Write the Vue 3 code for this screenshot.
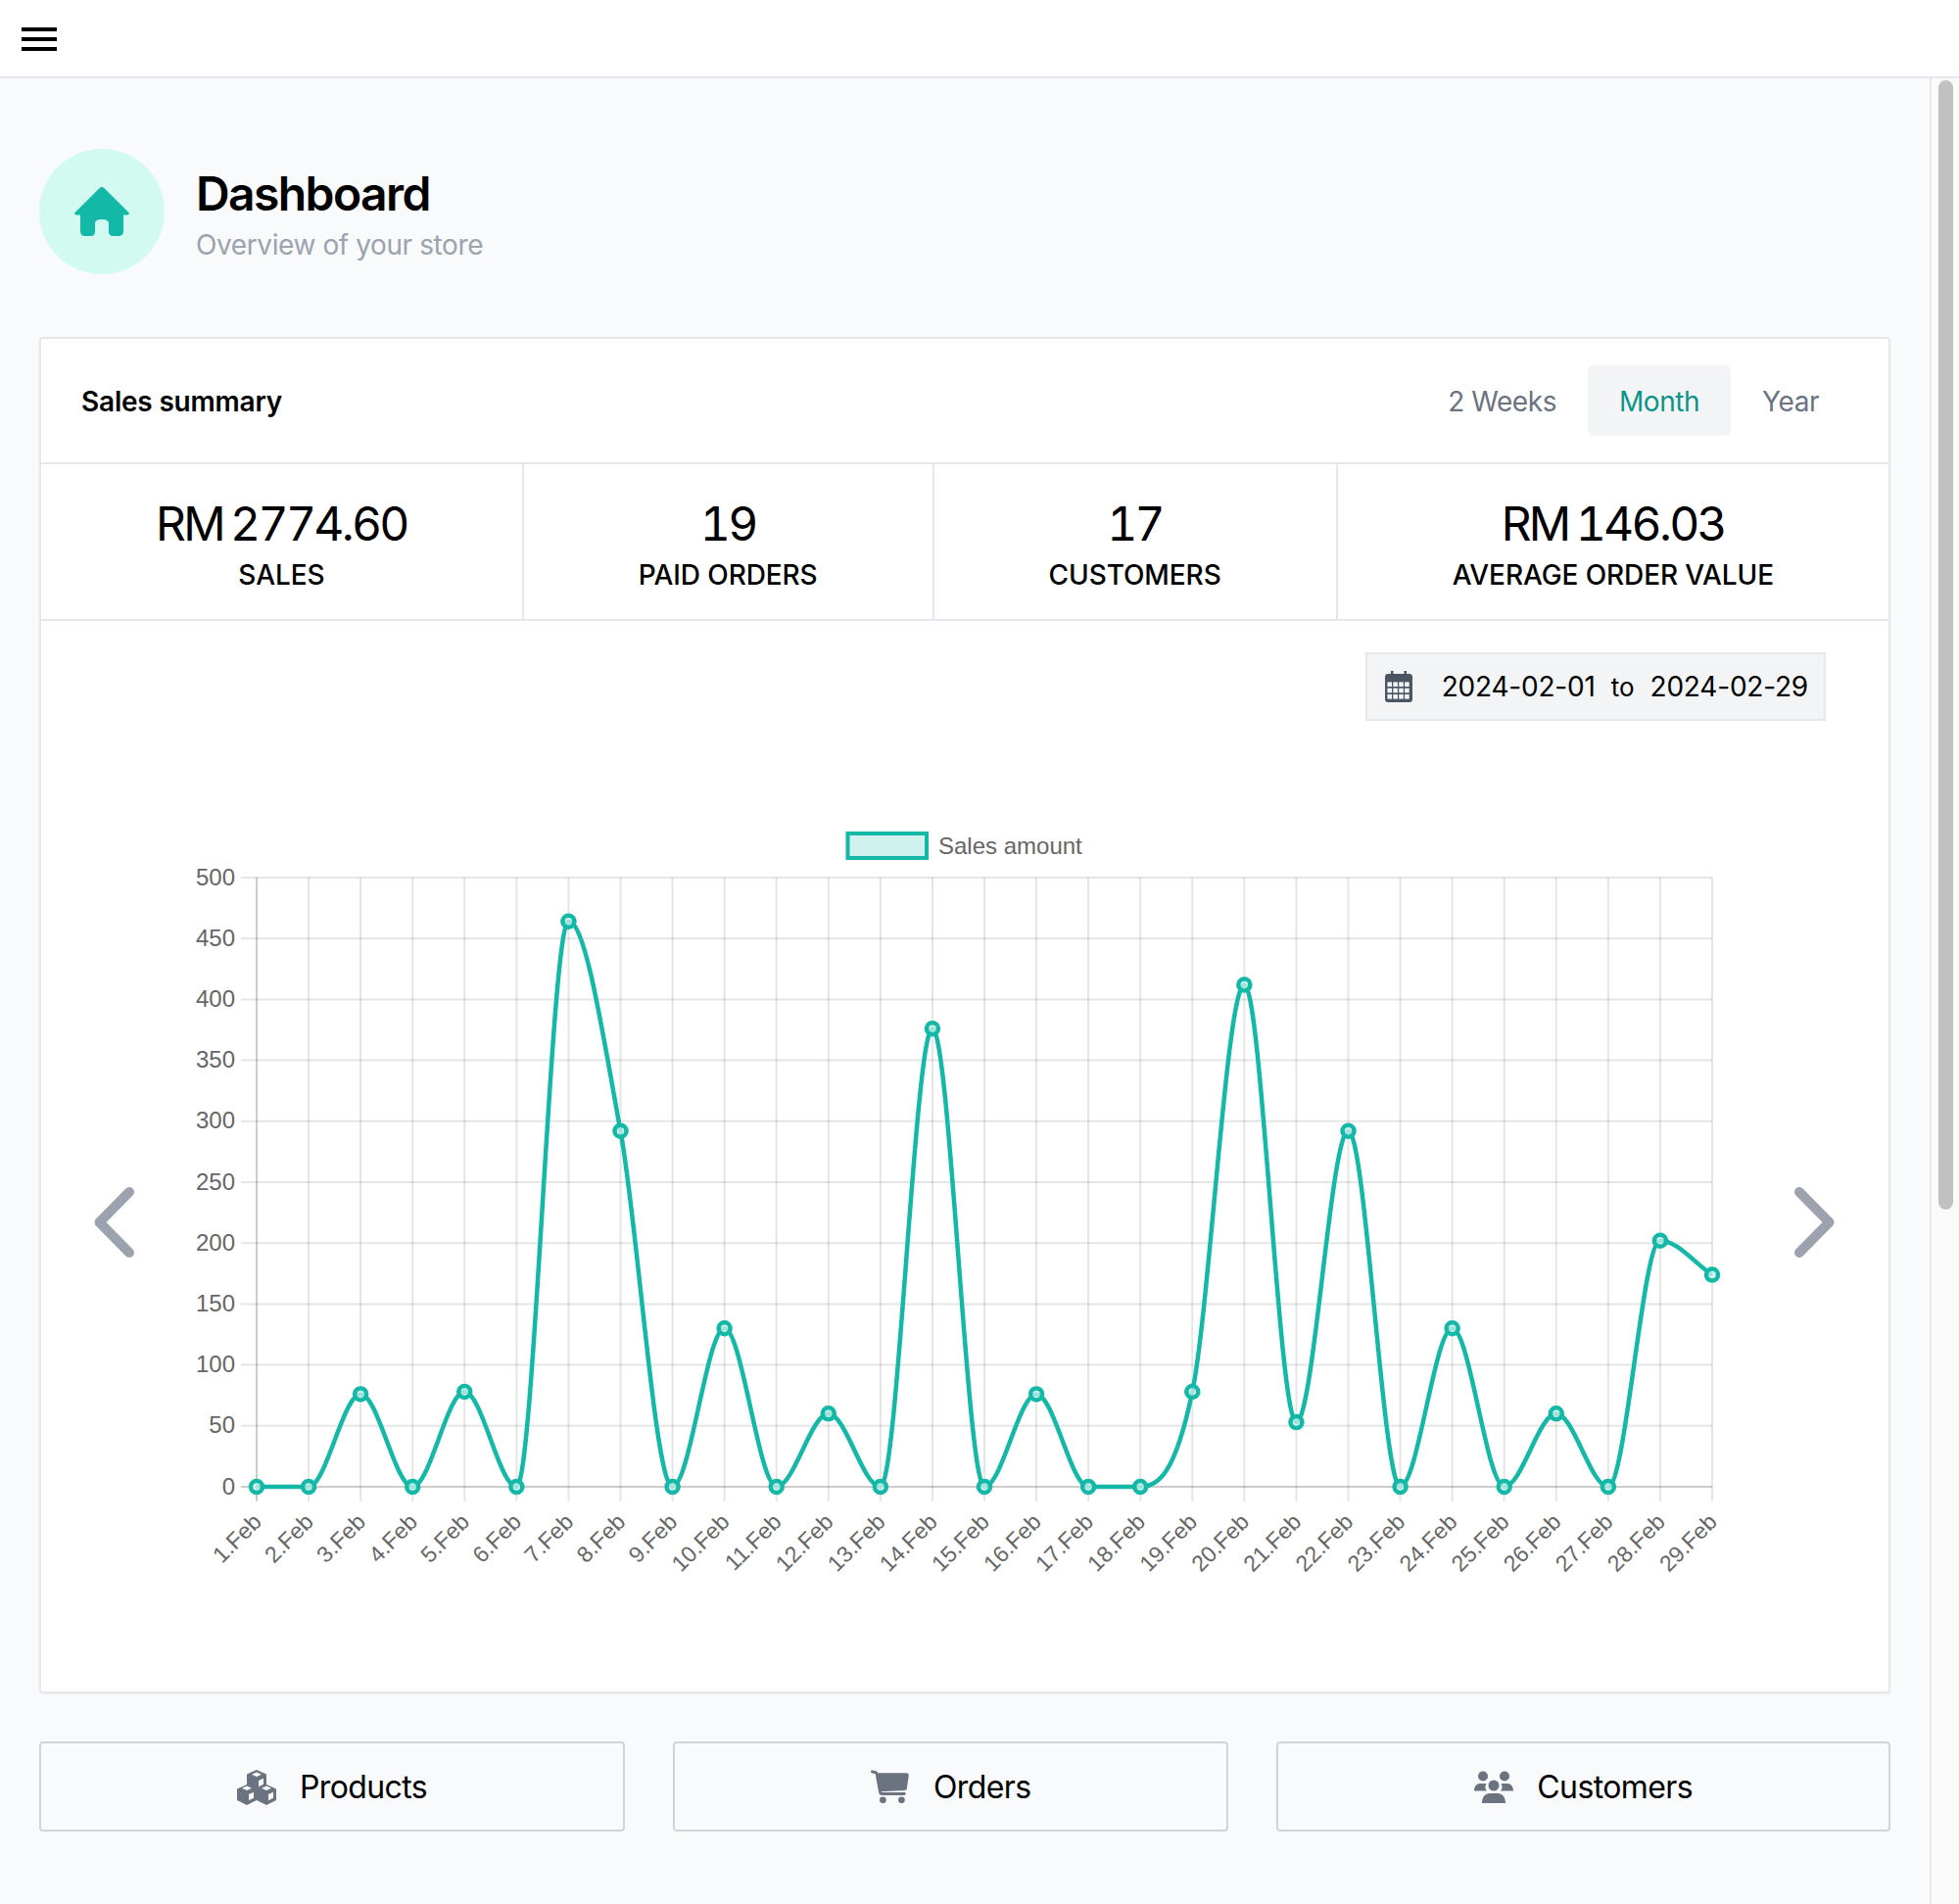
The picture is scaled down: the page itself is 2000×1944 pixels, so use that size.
<template>
    <div class="page">
        <header class="topbar">
            <button class="menu-button" type="button" aria-label="Menu">
                <span></span><span></span><span></span>
            </button>
        </header>

        <div class="layout">
            <main class="content">
                <div class="page-title">
                    <div class="title-icon">
                        <svg width="56" height="50" viewBox="0 0 56 50">
                            <path fill="#14b8a6" d="M28 0c.9 0 1.7.4 2.3 1.1l24.9 24.6c1.5 1.6.4 2.8-1.7 2.8H50v17c0 2.500-2 4.500-4.500 4.500H39c-2.200 0-4-1.800-4-4V37c0-2.800-3-4-7-4s-7 1.200-7 4v9c0 2.200-1.800 4-4 4h-6.500C8 50 6 48 6 45.500v-17H2.500c-2.100 0-3.200-1.200-1.700-2.800L25.700 1.100C26.300.4 27.100 0 28 0z" />
                        </svg>
                    </div>
                    <div class="title-text">
                        <h1>Dashboard</h1>
                        <p>Overview of your store</p>
                    </div>
                </div>

                <section class="card">
                    <div class="card-header">
                        <h2>Sales summary</h2>
                        <div class="tabs">
                            <button v-for="tab in tabs" :key="tab" type="button" class="tab" :class="{ active: tab === 'Month' }">{{ tab }}</button>
                        </div>
                    </div>

                    <div class="stats">
                        <div v-for="stat in stats" :key="stat.label" class="stat">
                            <div class="stat-value">{{ stat.value }}</div>
                            <div class="stat-label">{{ stat.label }}</div>
                        </div>
                    </div>

                    <div class="date-row">
                        <div class="date-range">
                            <svg width="28" height="32" viewBox="0 0 28 32">
                                <path fill="#4b5563" d="M6 0h2.500v3h11V0H22v3h3c1.700 0 3 1.300 3 3v23c0 1.700-1.300 3-3 3H3c-1.700 0-3-1.300-3-3V6c0-1.700 1.300-3 3-3h3z" />
                                <rect v-for="cell in calendarCells" :key="cell.key" :x="cell.x" :y="cell.y" width="4.600" height="4.600" fill="#f3f4f6" />
                            </svg>
                            <span class="date first">2024-02-01</span>
                            <span class="date-to">to</span>
                            <span class="date">2024-02-29</span>
                        </div>
                    </div>

                    <div class="chart-row">
                        <svg class="arrow" width="60" height="84" viewBox="0 0 60 84">
                            <path d="M46 11 15.500 42 46 73" fill="none" stroke="#9ca3af" stroke-width="10" stroke-linecap="round" stroke-linejoin="round" />
                        </svg>

                        <svg class="chart" width="1600" height="840" viewBox="160 828 1600 840">
                            <rect x="865.500" y="851" width="80.500" height="25" fill="#d0f1ed" stroke="#14b8a6" stroke-width="4" />
                            <text class="chart-text" x="958" y="871.500">Sales amount</text>

                            <g v-for="tick in yTicks" :key="tick.label">
                                <line x1="246" :x2="chartRight" :y1="tick.y" :y2="tick.y" :stroke="tick.label === 0 ? 'rgba(0,0,0,0.2)' : 'rgba(0,0,0,0.1)'" stroke-width="2" />
                                <text class="chart-text" x="240" :y="tick.y + 7.5" text-anchor="end">{{ tick.label }}</text>
                            </g>

                            <g v-for="(point, i) in points" :key="point.label">
                                <line :x1="point.x" :x2="point.x" :y1="chartTop" y2="1533" :stroke="i === 0 ? 'rgba(0,0,0,0.2)' : 'rgba(0,0,0,0.1)'" stroke-width="2" />
                                <text class="chart-text x-label" :x="point.x + 2" y="1551" text-anchor="end" :transform="`rotate(-45 ${point.x + 2} 1551)`" dominant-baseline="middle">{{ point.label }}</text>
                            </g>

                            <path :d="linePath" fill="none" stroke="#14b8a6" stroke-width="4.500" />
                            <circle v-for="point in points" :key="point.label" :cx="point.x" :cy="point.y" r="6" fill="rgba(208,241,237,0.75)" stroke="#14b8a6" stroke-width="4.500" />
                        </svg>

                        <svg class="arrow" width="60" height="84" viewBox="0 0 60 84">
                            <path d="M15 11 45.500 42 15 73" fill="none" stroke="#9ca3af" stroke-width="10" stroke-linecap="round" stroke-linejoin="round" />
                        </svg>
                    </div>
                </section>

                <nav class="links">
                    <a class="link" href="#">
                        <svg width="40" height="36" viewBox="0 0 40 36">
                            <path fill="#6b7280" d="M20 0l10 4.500V15l10 4.500V31l-10 5-10-5-10 5-10-5V19.500L10 15V4.500z" />
                            <path fill="#f9fafb" d="M20 2.500 25 4.800 20 7.100 15 4.800zM22 11l5-2.200v6l-5 2.400zM10 16.500l5 2.300-5 2.300-5-2.300zM30 16.500l5 2.300-5 2.300-5-2.300zM12 25l5-2.200v6l-5 2.400zM32 25l5-2.200v6l-5 2.400z" />
                        </svg>
                        <span>Products</span>
                    </a>
                    <a class="link" href="#">
                        <svg width="40" height="35" viewBox="0 0 42 36">
                            <path d="M1.500 1.500 5 2.500c.8 0 1.200.4 1.400 1.200l3.600 20c.2 1 .9 1.600 2 1.600h24" fill="none" stroke="#6b7280" stroke-width="3" stroke-linecap="round" />
                            <path fill="#6b7280" d="M7 3h31c2 0 3 1 2.700 3l-2 13.500c-.3 1.500-1 2-2.500 2.100L10 23z" />
                            <circle cx="13" cy="32" r="3.500" fill="#6b7280" />
                            <circle cx="33" cy="32" r="3.500" fill="#6b7280" />
                        </svg>
                        <span>Orders</span>
                    </a>
                    <a class="link" href="#">
                        <svg width="40" height="34" viewBox="0 0 40 34">
                            <g fill="#6b7280">
                                <ellipse cx="9" cy="5.500" rx="5" ry="5" />
                                <ellipse cx="31" cy="5.500" rx="5" ry="5" />
                                <ellipse cx="20" cy="15" rx="5.500" ry="5.500" />
                                <path d="M0 20.500C0 16 2.500 13 6 13h6.500c-1.500 3-1.500 5.500.5 7.500zM40 20.500c0-4.500-2.500-7.500-6-7.500h-6.500c1.500 3 1.500 5.500-.5 7.500zM8 33c0-6.500 3.500-10 8-10h8c4.500 0 8 3.500 8 10z" />
                            </g>
                        </svg>
                        <span>Customers</span>
                    </a>
                </nav>
            </main>

            <aside class="scrollbar">
                <div class="scrollbar-thumb"></div>
            </aside>
        </div>
    </div>
</template>

<script setup>
import { computed } from 'vue';

const tabs = ['2 Weeks', 'Month', 'Year'];

const stats = [
    { value: 'RM 2774.60', label: 'SALES' },
    { value: '19', label: 'PAID ORDERS' },
    { value: '17', label: 'CUSTOMERS' },
    { value: 'RM 146.03', label: 'AVERAGE ORDER VALUE' }
];

const calendarCells = [];
for (let row = 0; row < 3; row++) {
    for (let col = 0; col < 4; col++) {
        calendarCells.push({ key: `${row}-${col}`, x: 2.4 + col * 5.9, y: 11.4 + row * 6.3 });
    }
}

const sales = [0, 0, 76, 0, 78, 0, 464, 292, 0, 130, 0, 60, 0, 376, 0, 76, 0, 0, 78, 412, 53, 292, 0, 130, 0, 60, 0, 202, 174];

const chartLeft = 262;
const chartRight = 1748;
const chartTop = 896;
const chartBottom = 1518;

const yFor = (value) => chartBottom - (value / 500) * (chartBottom - chartTop);

const yTicks = [500, 450, 400, 350, 300, 250, 200, 150, 100, 50, 0].map((label) => ({ label, y: yFor(label) }));

const points = sales.map((value, i) => ({
    label: `${i + 1}.Feb`,
    x: chartLeft + (i * (chartRight - chartLeft)) / (sales.length - 1),
    y: yFor(value)
}));

// monotone cubic, as chart.js does it with cubicInterpolationMode: 'monotone'
const linePath = computed(() => {
    const n = points.length;
    const delta = [];
    for (let i = 0; i < n - 1; i++) {
        delta.push((points[i + 1].y - points[i].y) / (points[i + 1].x - points[i].x));
    }
    const m = points.map((p, i) => {
        if (i === 0) return delta[0];
        if (i === n - 1) return delta[n - 2];
        if (Math.sign(delta[i - 1]) !== Math.sign(delta[i])) return 0;
        return (delta[i - 1] + delta[i]) / 2;
    });
    for (let i = 0; i < n - 1; i++) {
        if (delta[i] === 0) {
            m[i] = 0;
            m[i + 1] = 0;
            continue;
        }
        const alpha = m[i] / delta[i];
        const beta = m[i + 1] / delta[i];
        const squared = alpha * alpha + beta * beta;
        if (squared > 9) {
            const tau = 3 / Math.sqrt(squared);
            m[i] = alpha * tau * delta[i];
            m[i + 1] = beta * tau * delta[i];
        }
    }
    let d = `M${points[0].x} ${points[0].y}`;
    for (let i = 1; i < n; i++) {
        const dx = (points[i].x - points[i - 1].x) / 3;
        d += ` C${points[i - 1].x + dx} ${points[i - 1].y + m[i - 1] * dx} ${points[i].x - dx} ${points[i].y - m[i] * dx} ${points[i].x} ${points[i].y}`;
    }
    return d;
});
</script>

<style>
html,
body {
    margin: 0;
    background-color: #f9fafb;
}
</style>

<style scoped>
.page {
    width: 2000px;
    height: 1944px;
    overflow: hidden;
    display: flex;
    flex-direction: column;
    background-color: #f9fafb;
    font-family: Inter, "Liberation Sans", sans-serif;
    color: #000;
}

.topbar {
    height: 78px;
    flex-shrink: 0;
    box-sizing: content-box;
    display: flex;
    align-items: center;
    padding-left: 22px;
    background-color: #fff;
    border-bottom: 2px solid #e5e7eb;
}

.menu-button {
    display: flex;
    flex-direction: column;
    gap: 6px;
    width: 36px;
    margin-top: 2px;
    padding: 0;
    border: none;
    background: none;
}

.menu-button span {
    display: block;
    height: 4px;
    background-color: #000;
}

.layout {
    flex: 1;
    display: flex;
    min-height: 0;
}

.content {
    flex: 1;
    min-width: 0;
    padding: 72px 40px 0 40px;
}

.page-title {
    display: flex;
    align-items: center;
    gap: 32px;
    margin-bottom: 64px;
}

.title-icon {
    width: 128px;
    height: 128px;
    border-radius: 50%;
    background-color: #d2faf0;
    display: flex;
    align-items: center;
    justify-content: center;
}

.title-text {
    padding-top: 6px;
}

.page-title h1 {
    margin: -1px 0 0;
    font-size: 48px;
    line-height: 56px;
    font-weight: 600;
    letter-spacing: -1.6px;
}

.page-title p {
    margin: 6px 0 0;
    font-size: 28px;
    line-height: 36px;
    letter-spacing: -0.4px;
    color: #9ca3af;
}

.card {
    background-color: #fff;
    border: 2px solid #e5e7eb;
    border-radius: 4px;
    box-shadow: 0 1px 3px rgba(0, 0, 0, 0.05);
}

.card-header {
    display: flex;
    align-items: center;
    justify-content: space-between;
    padding: 27px 39px 27px 40px;
    border-bottom: 2px solid #e5e7eb;
}

.card-header h2 {
    margin: 2px 0 0 1px;
    font-size: 28px;
    font-weight: 600;
    letter-spacing: -0.2px;
}

.tabs {
    display: flex;
}

.tab {
    height: 72px;
    padding: 2px 32px 0;
    border: none;
    border-radius: 6px;
    background: none;
    font-family: inherit;
    font-size: 28px;
    letter-spacing: -0.45px;
    color: #6b7280;
}

.tab.active {
    background-color: #f3f4f6;
    color: #0d9488;
}

.stats {
    display: flex;
    border-bottom: 2px solid #e5e7eb;
}

.stat {
    flex: 1 1 auto;
    padding: 33px 32px 27px;
    text-align: center;
    border-right: 2px solid #e5e7eb;
}

.stat:last-child {
    border-right: none;
}

.stat-value {
    font-size: 48px;
    line-height: 56px;
    font-variant-numeric: tabular-nums;
    letter-spacing: -2.7px;
    word-spacing: -3px;
}

.stat-label {
    margin-top: 6px;
    font-size: 28px;
    line-height: 36px;
    font-weight: 500;
    letter-spacing: -0.1px;
}

.date-row {
    display: flex;
    justify-content: flex-end;
    padding: 32px 64px 0 0;
}

.date-range {
    display: flex;
    align-items: center;
    height: 70px;
    box-sizing: border-box;
    padding: 0 16px 0 18px;
    background-color: #f3f4f6;
    border: 2px solid #e5e7eb;
    font-size: 28px;
}

.date {
    letter-spacing: -0.2px;
}

.date.first {
    margin-left: 30px;
}

.date-to {
    margin: 0 16px;
    font-size: 26px;
}

.chart-row {
    display: flex;
    align-items: center;
    padding: 92px 46px 59px 44px;
}

.chart {
    flex: 0 0 1600px;
    margin: 0 auto 0 14px;
}

.chart-text {
    font-family: "Liberation Sans", Arial, sans-serif;
    font-size: 24px;
    fill: #666;
}

.x-label {
    font-size: 23px;
}

.links {
    display: flex;
    gap: 49px;
    margin-top: 49px;
}

.link {
    flex: 1 1 auto;
    display: flex;
    align-items: center;
    justify-content: center;
    gap: 24px;
    height: 92px;
    box-sizing: border-box;
    padding-top: 1px;
    border: 2px solid #d1d5db;
    border-radius: 4px;
    font-size: 32px;
    letter-spacing: -0.6px;
    color: #000;
    text-decoration: none;
}

.scrollbar {
    width: 30px;
    flex-shrink: 0;
    box-sizing: border-box;
    padding: 2px 6px 0 6.5px;
    background-color: #fafafa;
    border-left: 2px solid #e8e8e8;
}

.scrollbar-thumb {
    height: 1153px;
    border-radius: 8px;
    background-color: #c1c1c1;
}
</style>
